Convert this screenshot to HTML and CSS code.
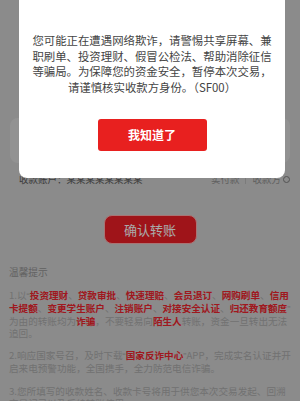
FILE: index.html
```html
<!DOCTYPE html>
<html lang="zh-CN">
<head>
<meta charset="utf-8">
<title>确认转账</title>
<link rel="stylesheet" href="styles.css">
</head>
<body>
<div class="page">
  <div class="card"></div>
  <div class="info-row">
    <span class="info-left">收款账户：某某某某某某某某</span>
    <span class="info-right"><span>实付款</span><span class="sep"></span><span>收款方</span><span class="dot"></span></span>
  </div>
  <button class="confirm-btn" type="button">确认转账</button>
  <section class="tips">
    <h2 class="tips-title">温馨提示</h2>
    <p class="tip">1.以<q>“</q><b>投资理财</b>、<b>贷款审批</b>、<b>快速理赔</b>、<b>会员退订</b>、<b>网购刷单</b>、<b>信用卡提额</b>、<b>变更学生账户</b>、<b>注销账户</b>、<b>对接安全认证</b>、<b>归还教育额度</b><q>”</q>为由的转账均为<b>诈骗</b>，不要轻易向<b>陌生人</b>转账，资金一旦转出无法追回。</p>
    <p class="tip">2.响应国家号召，及时下载<q>“</q><b>国家反诈中心</b><q>”</q>APP，完成实名认证并开启来电预警功能，全国携手，全力防范电信诈骗。</p>
    <p class="tip">3.您所填写的收款姓名、收款卡号将用于供您本次交易发起、回溯<br>交易记录以及后续转账使用。</p>
  </section>
</div>
<div class="overlay"></div>
<div class="modal" role="dialog">
  <p class="modal-text">您可能正在遭遇网络欺诈，请警惕共享屏幕、兼职刷单、投资理财、假冒公检法、帮助消除征信等骗局。为保障您的资金安全，暂停本次交易，请谨慎核实收款方身份。（SF00）</p>
  <button class="modal-btn" type="button">我知道了</button>
</div>
</body>
</html>
```
FILE: styles.css
```css
html, body {
  margin: 0;
  padding: 0;
}
body {
  width: 300px;
  height: 401px;
  overflow: hidden;
  position: relative;
  font-family: "Noto Sans CJK SC", "Noto Sans", sans-serif;
  background: #c7c7c7;
}
.page {
  display: flex;
  flex-direction: column;
}
.card {
  margin: 118px 10px 0;
  height: 45px;
  background: #d2d2d2;
  border-radius: 8px;
}
.info-row {
  margin-top: 9px;
  padding: 0 10px 0 19px;
  display: flex;
  justify-content: space-between;
  align-items: center;
  font-size: 9.5px;
  line-height: 14px;
  height: 14px;
  white-space: nowrap;
}
.info-left {
  color: #555;
}
.info-right {
  display: flex;
  align-items: center;
  gap: 6px;
  color: #8a8a8a;
}
.sep {
  width: 1px;
  height: 9px;
  background: #b0b0b0;
}
.dot {
  width: 5px;
  height: 5px;
  border: 1px solid #777;
  border-radius: 50%;
  margin-left: -4px;
}
.confirm-btn {
  display: block;
  margin: 29px auto 0;
  width: 93px;
  height: 29px;
  box-sizing: border-box;
  border: 1px solid #f3a7a7;
  border-radius: 8px;
  background: #e41d25;
  color: #f2f2f2;
  font-family: inherit;
  font-size: 13px;
  line-height: 1;
  padding: 0;
}
.tips {
  margin-top: 21px;
  padding: 0 8px 0 9px;
}
.tips-title {
  margin: 0;
  font-size: 9.7px;
  line-height: 14px;
  font-weight: normal;
  color: #8e8e8e;
}
.tip {
  margin: 10px 0 0;
  font-size: 9.6px;
  line-height: 12px;
  color: #a3a3a3;
}
.tip q {
  quotes: none;
  font-family: "Liberation Sans", sans-serif;
}
.tip b {
  color: #e4232b;
  font-weight: bold;
}
.tip:last-child {
  margin-top: 11px;
}
.overlay {
  position: absolute;
  inset: 0;
  background: rgba(0, 0, 0, 0.3);
}
.modal {
  position: absolute;
  left: 19px;
  top: -20px;
  width: 266px;
  height: 198px;
  box-sizing: border-box;
  background: #fff;
  border-radius: 8px;
  padding: 53px 13px 0;
  display: flex;
  flex-direction: column;
  align-items: center;
}
.modal-text {
  margin: 0;
  width: 240px;
  font-size: 11.4px;
  line-height: 15.7px;
  color: #444;
  text-align: center;
}
.modal-btn {
  margin-top: 23px;
  width: 109px;
  height: 32px;
  border: none;
  border-radius: 3px;
  background: #e8201f;
  color: #fff;
  font-family: inherit;
  font-size: 12px;
  font-weight: bold;
  padding: 0;
}
```
